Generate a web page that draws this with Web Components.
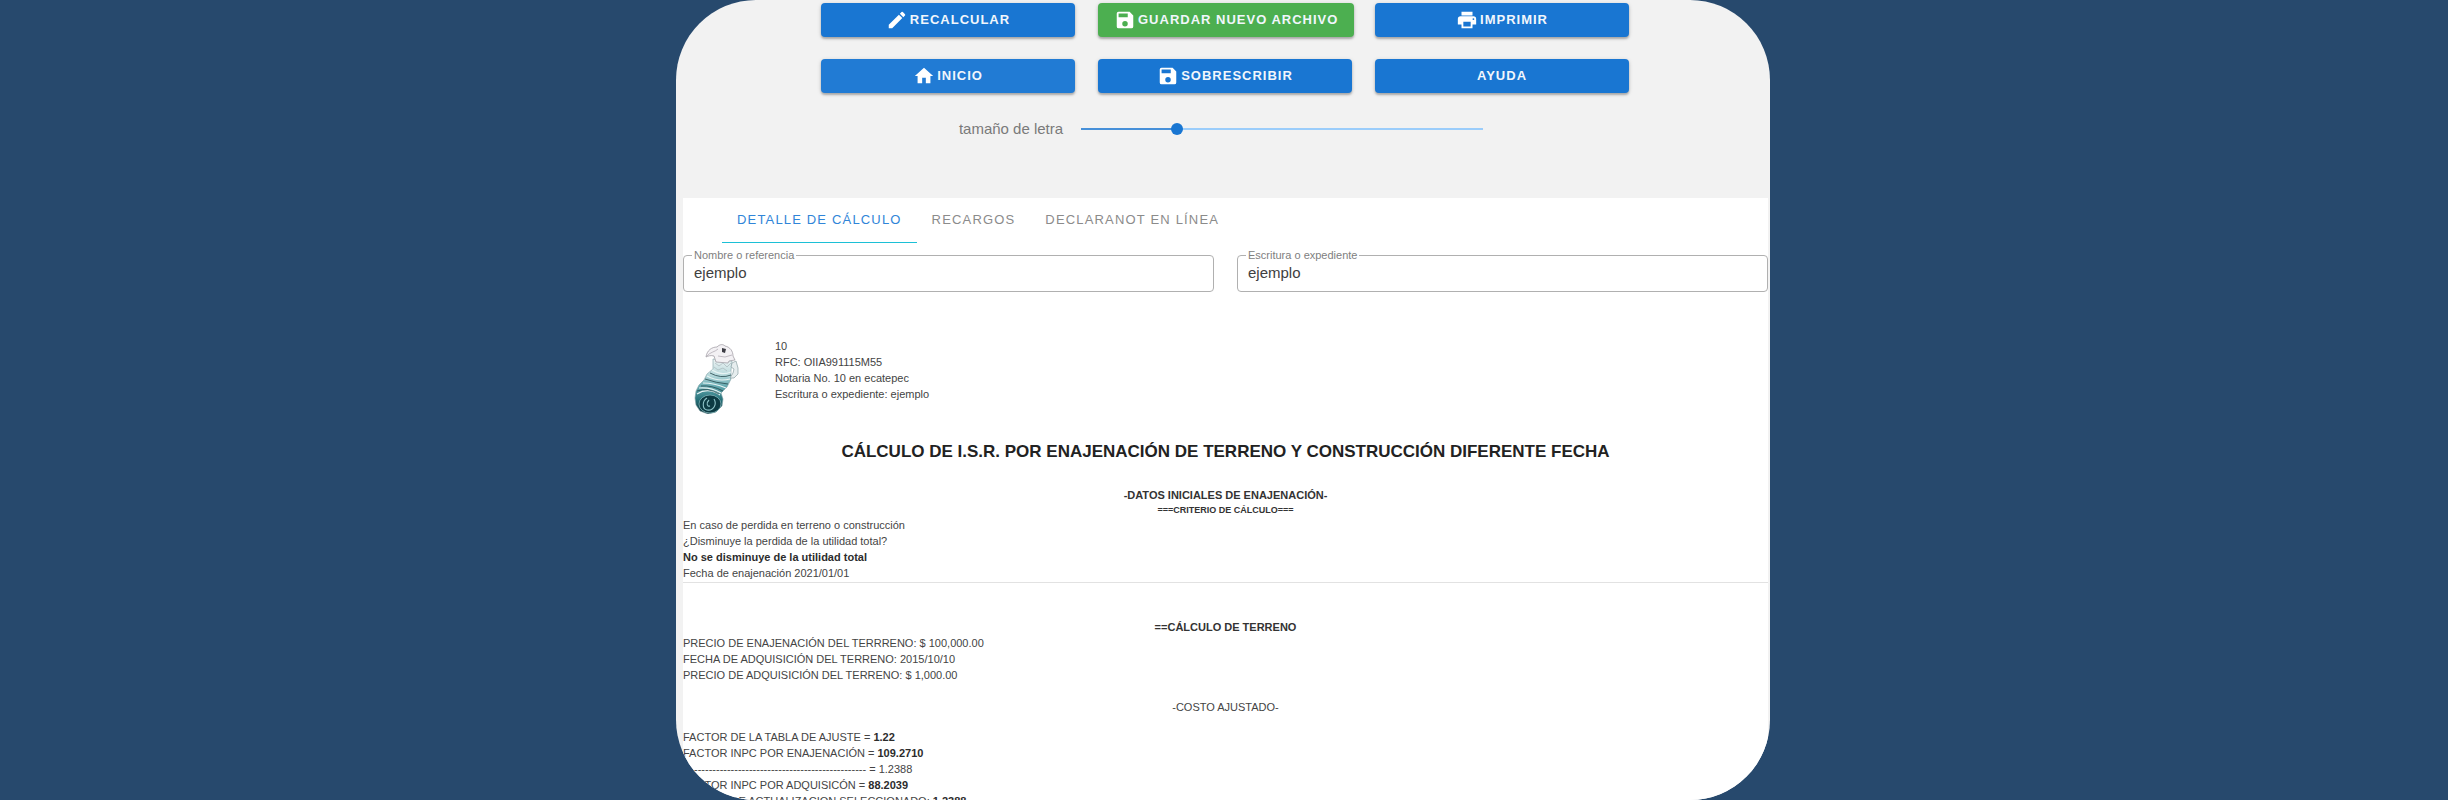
<!DOCTYPE html>
<html lang="es">
<head>
<meta charset="utf-8">
<meta name="viewport" content="width=device-width, initial-scale=1">
<title>Cálculo de I.S.R.</title>
<style>
  html, body { height: 100%; }
  body { margin: 0; background: #27496d; font-family: "Liberation Sans", Arial, sans-serif; overflow: hidden; }
</style>
</head>
<body>
<calc-app></calc-app>

<template id="t-app">
  <style>
    :host { display: flex; justify-content: center; height: 100vh; padding-right: 2px; }
    main { width: 1094px; max-width: 100%; box-sizing: border-box; height: 100%; overflow: hidden; border-radius: 80px; background: #f2f2f2; }
    .actions { display: grid; grid-template-columns: repeat(3, 254px); column-gap: 23px; row-gap: 22px; justify-content: center; padding: 3px 0 0 4px; }
    .panel { margin: 57px 2px 0 7px; background: #fff; }
    .tabs { display: flex; padding-left: 39px; }
    .fields { display: grid; grid-template-columns: 1fr 1fr; gap: 23px; padding-top: 10px; }
  </style>
  <main>
    <div class="actions">
      <action-button icon="edit">RECALCULAR</action-button>
      <action-button icon="save" tone="green">GUARDAR NUEVO ARCHIVO</action-button>
      <action-button icon="print">IMPRIMIR</action-button>
      <action-button icon="home" tone="soft">INICIO</action-button>
      <action-button icon="save">SOBRESCRIBIR</action-button>
      <action-button>AYUDA</action-button>
    </div>
    <font-slider></font-slider>
    <section class="panel">
      <div class="tabs" role="tablist">
        <tab-item active>DETALLE DE CÁLCULO</tab-item>
        <tab-item>RECARGOS</tab-item>
        <tab-item>DECLARANOT EN LÍNEA</tab-item>
      </div>
      <div class="fields">
        <outlined-field label="Nombre o referencia" value="ejemplo"></outlined-field>
        <outlined-field label="Escritura o expediente" value="ejemplo"></outlined-field>
      </div>
      <calc-report></calc-report>
    </section>
  </main>
</template>

<template id="t-button">
  <style>
    :host { display: block; }
    button { display: flex; align-items: center; justify-content: center; gap: 2px; box-sizing: border-box; min-width: 100%; height: 34px; padding: 0 16px; border: 0; border-radius: 4px; background: #1976d2; color: #f1f6fc; font: bold 13px/16px "Liberation Sans", Arial, sans-serif; letter-spacing: 1px; white-space: nowrap; box-shadow: 0 2px 2px rgba(0,0,0,.22), 0 1px 4px rgba(0,0,0,.16); cursor: pointer; }
    :host([tone="green"]) button { background: #4caf50; }
    :host([tone="soft"]) button { background: #217bd4; }
    svg { width: 22px; height: 22px; fill: #fff; flex: none; }
  </style>
  <button type="button"><slot></slot></button>
</template>

<template id="t-slider">
  <style>
    :host { display: flex; justify-content: center; align-items: center; gap: 18px; height: 24px; margin-top: 24px; padding-right: 4px; }
    label { font-size: 15px; line-height: 24px; color: #7a7a7a; }
    input { appearance: none; width: 402px; height: 12px; margin: 0; background: linear-gradient(#4790d9, #4790d9) 0 5px / 24% 2px no-repeat, linear-gradient(#9bcdfb, #9bcdfb) 0 5px / 100% 2px no-repeat; }
    input::-webkit-slider-thumb { appearance: none; width: 12px; height: 12px; border-radius: 50%; background: #1976d2; }
  </style>
  <label for="size">tamaño de letra</label>
  <input id="size" type="range" min="0" max="100" value="23">
</template>

<template id="t-tab">
  <style>
    :host { display: block; }
    button { display: block; height: 45px; padding: 0 15px; border: 0; border-bottom: 1px solid transparent; background: none; color: #8b8b8b; font: 13px/16px "Liberation Sans", Arial, sans-serif; letter-spacing: 0.09em; cursor: pointer; }
    :host([active]) button { color: #3085d8; border-color: #1cc0d6; }
  </style>
  <button type="button" role="tab"><slot></slot></button>
</template>

<template id="t-field">
  <style>
    :host { display: block; }
    fieldset { box-sizing: border-box; height: 43px; min-width: 0; margin: -4px 0 0; padding: 0 9px; border: 1px solid #b0b0b0; border-radius: 4px; }
    legend { padding: 0 2px; margin-left: -1px; height: 12px; line-height: 12px; font-size: 11px; color: #808080; }
    input { display: block; width: 100%; height: 24px; padding: 0 0 0 1px; border: 0; outline: 0; background: none; color: #404040; font: 15px/24px "Liberation Sans", Arial, sans-serif; }
  </style>
  <fieldset><legend><label for="f"></label></legend><input id="f" type="text"></fieldset>
</template>

<template id="t-crest">
  <style>
    :host { display: block; width: 46px; }
    svg { display: block; width: 46px; height: 70px; }
  </style>
  <svg viewBox="0 0 46 70" aria-hidden="true">
    <defs>
      <linearGradient id="body" x1="0" y1="0" x2="0" y2="1">
        <stop offset="0" stop-color="#eef3f4"/><stop offset=".3" stop-color="#b5d8db"/><stop offset=".5" stop-color="#62a9b0"/><stop offset=".75" stop-color="#257078"/><stop offset="1" stop-color="#0b2f36"/>
      </linearGradient>
    </defs>
    <path d="M19 15 19 25 13 30 10 36 5 41 2 47 1 54 2 61 6 67 14 70 22 68 28 62 29 55 27 49 33 43 37 35 37 26 38 17Z" fill="url(#body)" stroke="#7fa0a4" stroke-width=".6"/>
    <path d="M12 13C13 6 18 3 23 3C26 0 29 0 31 2C36 3 39 7 39 12L41 16 35 17 34 19 22 18 20 12C17 11 14 12 12 13Z" fill="#f3f1f4" stroke="#98949c" stroke-width=".7"/>
    <path d="M13 12C16 8 21 8 24 5M24 12 31 13 38 11" fill="none" stroke="#aaa5ae" stroke-width=".7"/>
    <path d="M38 19 42 17 44 24 44 30 40 34 36 34 39 29 40 25 37 23Z" fill="#e6edee" stroke="#8ba0a4" stroke-width=".7"/>
    <path d="M28 4 32 5 31 9 28 8Z" fill="#3c3c44"/>
    <path d="M18 26Q27 32 37 28M13 32Q24 38 36 35M9 39Q20 39 32 44M5 44Q17 43 27 49M3 50Q14 43 26 51" fill="none" stroke="#e7f3f3" stroke-width="1.200"/>
    <path d="M16 29Q27 35 37 31M11 35Q22 39 34 40M7 42Q18 41 29 47M3 47Q14 43 25 50" fill="none" stroke="#26494e" stroke-width=".8"/>
    <ellipse cx="16" cy="60" rx="11" ry="9" fill="#0d3b43" stroke="#7fb3b7" stroke-width=".8"/>
    <path d="M13 54C8 57 8 65 13 66C20 67 23 60 20 55M15 56C12 59 13 63 16 62" fill="none" stroke="#8fc4c8" stroke-width="1.100"/>
    <path d="M21 19 25 22 29 19 33 23 37 19M20 23 24 26 29 24 33 27" fill="none" stroke="#a9b8bc" stroke-width=".7"/>
  </svg>
</template>

<template id="t-report">
  <style>
    :host { display: block; color: #444; font-size: 11px; line-height: 16px; }
    header { display: flex; gap: 35px; padding: 46px 0 0 11px; }
    calc-crest { margin-top: 6px; }
    p, h1, h2, h3 { margin: 0; }
    b { color: #2c2c2c; }
    h1 { margin-top: 26px; font-size: 17px; line-height: 24px; text-align: center; color: #222; }
    h2 { font-size: 11px; line-height: 16px; text-align: center; color: #333; }
    h3 { font-size: 9px; line-height: 14px; text-align: center; color: #333; }
    .start { margin-top: 23px; }
    hr { height: 1px; margin: 1px 0 36px; border: 0; background: #e2e2e2; }
    .mid { text-align: center; margin: 16px 0 14px; }
    .lines { white-space: nowrap; }
  </style>
  <header>
    <calc-crest></calc-crest>
    <div>
      <p>10</p><p>RFC: OIIA991115M55</p><p>Notaria No. 10 en ecatepec</p><p>Escritura o expediente: ejemplo</p>
    </div>
  </header>
  <h1>CÁLCULO DE I.S.R. POR ENAJENACIÓN DE TERRENO Y CONSTRUCCIÓN DIFERENTE FECHA</h1>
  <h2 class="start">-DATOS INICIALES DE ENAJENACIÓN-</h2>
  <h3>===CRITERIO DE CÁLCULO===</h3>
  <div class="lines">
    <p>En caso de perdida en terreno o construcción</p>
    <p>¿Disminuye la perdida de la utilidad total?</p>
    <p><b>No se disminuye de la utilidad total</b></p>
    <p>Fecha de enajenación 2021/01/01</p>
  </div>
  <hr>
  <h2>==CÁLCULO DE TERRENO</h2>
  <div class="lines">
    <p>PRECIO DE ENAJENACIÓN DEL TERRRENO: $ 100,000.00</p>
    <p>FECHA DE ADQUISICIÓN DEL TERRENO: 2015/10/10</p>
    <p>PRECIO DE ADQUISICIÓN DEL TERRENO: $ 1,000.00</p>
  </div>
  <p class="mid">-COSTO AJUSTADO-</p>
  <div class="lines">
    <p>FACTOR DE LA TABLA DE AJUSTE = <b>1.22</b></p>
    <p>FACTOR INPC POR ENAJENACIÓN = <b>109.2710</b></p>
    <p>-------------------------------------------------- = 1.2388</p>
    <p>FACTOR INPC POR ADQUISICÓN = <b>88.2039</b></p>
    <p>FACTOR DE ACTUALIZACION SELECCIONADO: <b>1.2388</b></p>
  </div>
</template>

<script>
  const ICONS = {
    edit: 'M3 17.250V21h3.750L17.810 9.940l-3.750-3.750L3 17.250zM20.710 7.040a1 1 0 0 0 0-1.410l-2.340-2.340a1 1 0 0 0-1.410 0l-1.830 1.830 3.750 3.750 1.830-1.830z',
    save: 'M17 3H5a2 2 0 0 0-2 2v14a2 2 0 0 0 2 2h14a2 2 0 0 0 2-2V7l-4-4zm-5 16a3 3 0 1 1 0-6 3 3 0 0 1 0 6zm3-10H5V5h10v4z',
    print: 'M19 8H5a3 3 0 0 0-3 3v6h4v4h12v-4h4v-6a3 3 0 0 0-3-3zm-3 11H8v-5h8v5zm3-7a1 1 0 1 1 0-2 1 1 0 0 1 0 2zM18 3H6v4h12V3z',
    home: 'M10 20v-6h4v6h5v-8h3L12 3 2 12h3v8h5z'
  };
  function define(name, template, setup) {
    customElements.define(name, class extends HTMLElement {
      constructor() {
        super();
        this.attachShadow({ mode: 'open' }).append(document.getElementById(template).content.cloneNode(true));
      }
      connectedCallback() { if (setup) setup(this, this.shadowRoot); }
    });
  }
  define('action-button', 't-button', (host, root) => {
    const icon = ICONS[host.getAttribute('icon')];
    if (icon) root.querySelector('button').insertAdjacentHTML('afterbegin', `<svg viewBox="0 0 24 24" aria-hidden="true"><path d="${icon}"/></svg>`);
  });
  define('font-slider', 't-slider');
  define('tab-item', 't-tab', (host, root) => {
    root.querySelector('button').setAttribute('aria-selected', host.hasAttribute('active'));
  });
  define('outlined-field', 't-field', (host, root) => {
    root.querySelector('label').textContent = host.getAttribute('label');
    root.querySelector('input').value = host.getAttribute('value');
  });
  define('calc-crest', 't-crest');
  define('calc-report', 't-report');
  define('calc-app', 't-app');
</script>
</body>
</html>
